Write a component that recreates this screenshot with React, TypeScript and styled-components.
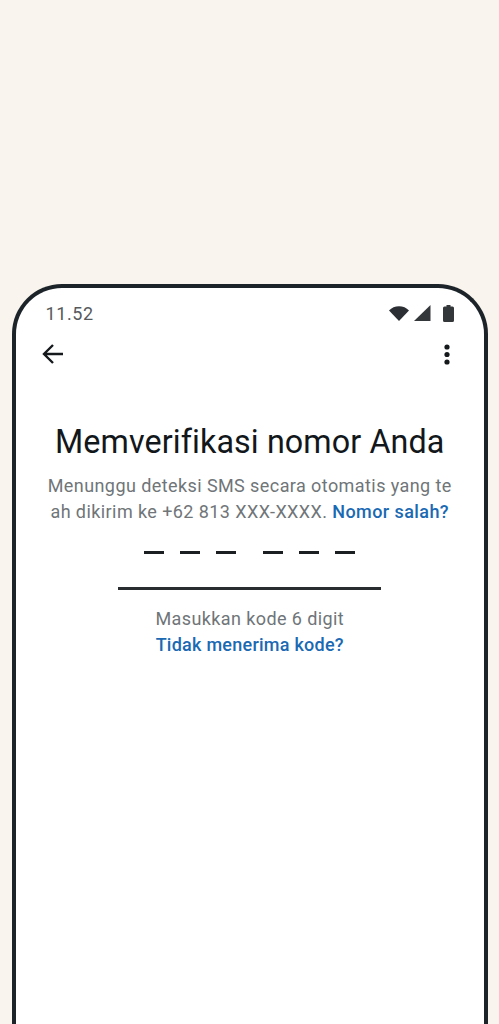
import React from 'react';
import styled, { createGlobalStyle } from 'styled-components';

const GlobalStyle = createGlobalStyle`
  html, body {
    margin: 0;
    padding: 0;
    height: 1024px;
    overflow: hidden;
    background: #f9f4ed;
    font-family: Roboto, "Liberation Sans", sans-serif;
  }
`;

const Page = styled.div`
  height: 1024px;
  padding: 284px 11px 0 11.5px;
  box-sizing: border-box;
  overflow: hidden;
`;

const Phone = styled.div`
  height: 760px;
  box-sizing: border-box;
  background: #fff;
  border: 4.5px solid #1c2329;
  border-bottom: 0;
  border-radius: 50px 50px 0 0;
  display: flex;
  flex-direction: column;
  align-items: center;
`;

const StatusBar = styled.div`
  align-self: stretch;
  height: 22px;
  margin-top: 14px;
  padding: 0 30px 0 30px;
  display: flex;
  align-items: center;
  justify-content: space-between;
`;

const Clock = styled.span`
  font-size: 18px;
  letter-spacing: 0.6px;
  color: #55595c;
`;

const StatusIcons = styled.div`
  display: flex;
  align-items: center;
  gap: 5px;
`;

const AppBar = styled.div`
  align-self: stretch;
  height: 30px;
  margin-top: 15px;
  padding: 0 34px 0 26px;
  display: flex;
  align-items: center;
  justify-content: space-between;
`;

const Title = styled.h1`
  margin: 53px 0 0;
  font-size: 32.3px;
  line-height: 40px;
  font-weight: 400;
  letter-spacing: 0.1px;
  color: #12171b;
  white-space: nowrap;
`;

const Description = styled.p`
  margin: 11px 0 0;
  width: 420px;
  font-size: 18px;
  line-height: 26px;
  letter-spacing: 0.42px;
  text-align: center;
  color: #6f7578;
`;

const Link = styled.a`
  color: #1a69b3;
  font-weight: 500;
`;

const CodeRow = styled.div`
  margin-top: 26px;
  display: flex;
  gap: 27px;
`;

const CodeGroup = styled.div`
  display: flex;
  gap: 16px;
`;

const Digit = styled.span`
  width: 20px;
  height: 3px;
  background: #1b1f22;
`;

const Underline = styled.div`
  margin-top: 33px;
  width: 263px;
  height: 3px;
  background: #2a2d30;
`;

const Hint = styled.div`
  margin-top: 16px;
  font-size: 18px;
  line-height: 26px;
  letter-spacing: 0.4px;
  color: #6f7578;
`;

const ResendLink = styled(Link)`
  font-size: 18px;
  line-height: 26px;
  letter-spacing: 0.25px;
`;

const WifiIcon = () => (
  <svg width="20" height="15" viewBox="0 0 20 15">
    <path d="M0 4.5C2.600 1.800 6.100 0.300 10 0.300s7.400 1.500 10 4.200L10 15z" fill="#2b2f33" />
  </svg>
);

const SignalIcon = () => (
  <svg width="17" height="16" viewBox="0 0 17 16">
    <path d="M0 16L16.500 0v16z" fill="#33373a" />
  </svg>
);

const BatteryShape = styled.svg`
  margin-left: 7px;
`;

const BatteryIcon = () => (
  <BatteryShape width="11" height="17" viewBox="0 0 11 17">
    <path d="M3.500 0h4v1.500h2A1.500 1.500 0 0 1 11 3v12.500a1.500 1.500 0 0 1-1.500 1.500h-8A1.500 1.500 0 0 1 0 15.500V3a1.500 1.500 0 0 1 1.500-1.500h2z" fill="#33373a" />
  </BatteryShape>
);

const BackIcon = () => (
  <svg width="21" height="20" viewBox="0 0 21 20" fill="none" stroke="#15191c" strokeWidth="2.4">
    <path d="M21 10H2M11 1l-9 9 9 9" />
  </svg>
);

const MoreIcon = () => (
  <svg width="6" height="21" viewBox="0 0 6 21" fill="#15191c">
    <circle cx="3" cy="3" r="2.600" />
    <circle cx="3" cy="10.500" r="2.600" />
    <circle cx="3" cy="18" r="2.600" />
  </svg>
);

export default function App() {
  return (
    <Page>
      <GlobalStyle />
      <Phone>
        <StatusBar>
          <Clock>11.52</Clock>
          <StatusIcons>
            <WifiIcon />
            <SignalIcon />
            <BatteryIcon />
          </StatusIcons>
        </StatusBar>
        <AppBar>
          <BackIcon />
          <MoreIcon />
        </AppBar>
        <Title>Memverifikasi nomor Anda</Title>
        <Description>
          Menunggu deteksi SMS secara otomatis yang te
          <br />
          ah dikirim ke +62 813 XXX-XXXX. <Link>Nomor salah?</Link>
        </Description>
        <CodeRow>
          <CodeGroup>
            <Digit />
            <Digit />
            <Digit />
          </CodeGroup>
          <CodeGroup>
            <Digit />
            <Digit />
            <Digit />
          </CodeGroup>
        </CodeRow>
        <Underline />
        <Hint>Masukkan kode 6 digit</Hint>
        <ResendLink>Tidak menerima kode?</ResendLink>
      </Phone>
    </Page>
  );
}
